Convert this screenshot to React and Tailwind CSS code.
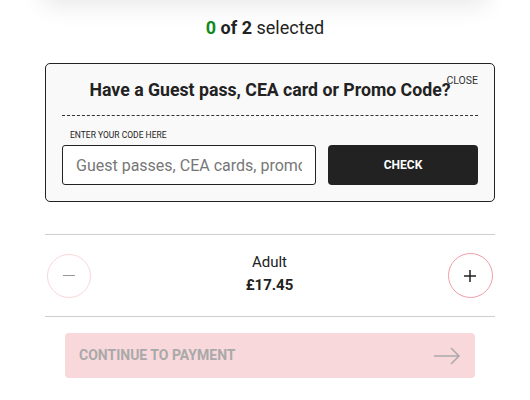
import React, { useState } from "react";

const App = () => {
  const [code, setCode] = useState("");
  const [count, setCount] = useState(0);

  return (
    <div className="w-[530px] h-[400px] bg-white overflow-hidden font-['Roboto',sans-serif] text-[#222]">
      {/* bottom of the card above */}
      <div className="mx-[42px] -mt-[40px] h-[40px] bg-white rounded-b-[10px] shadow-[0_6px_24px_rgba(0,0,0,0.09)]" />

      <p className="mt-[16px] text-center text-[18px] leading-[24px]">
        <span className="font-bold text-[#15891f]">{count}</span>{" "}
        <span className="font-bold">of 2</span> selected
      </p>

      <div className="ml-[45px] w-[450px] mt-[23px] border border-[#222] rounded-[5px] bg-[#f9f9f9] px-[16px] pt-[14px] pb-[16px]">
        <div className="relative">
          <h3 className="text-center text-[17.7px] leading-[24px] font-bold">
            Have a Guest pass, CEA card or Promo Code?
          </h3>
          <button className="absolute right-0 -top-[3px] text-[10.5px] leading-[12px] text-[#333]">
            CLOSE
          </button>
        </div>
        <div className="mt-[13px] border-t border-dashed border-[#333]" />
        <label className="block mt-[14px] ml-[8px] text-[8.5px] leading-[10px] text-[#222]">
          ENTER YOUR CODE HERE
        </label>
        <div className="mt-[5px] flex gap-[12px]">
          <input
            value={code}
            onChange={(e) => setCode(e.target.value)}
            placeholder="Guest passes, CEA cards, promo codes"
            className="w-[254px] h-[40px] border border-[#222] rounded-[3px] bg-white px-[13px] text-[16px] text-[#222] placeholder:text-[#777] outline-none"
          />
          <button className="flex-1 h-[40px] bg-[#222] rounded-[4px] text-white text-[12px] font-bold">
            CHECK
          </button>
        </div>
      </div>

      <div className="ml-[45px] w-[450px] mt-[32px] border-t border-[#cfcfcf] border-b py-[18px] px-[2px] flex items-center justify-between">
        <button
          onClick={() => setCount(Math.max(0, count - 1))}
          className="w-[44px] h-[44px] rounded-full border border-[#fbd6da] flex items-center justify-center"
        >
          <span className="block w-[12px] h-[1.5px] bg-[#999]" />
        </button>
        <div className="text-center -mt-[3px]">
          <p className="text-[15px] leading-[23px]">Adult</p>
          <p className="text-[15px] leading-[23px] font-bold">£17.45</p>
        </div>
        <button
          onClick={() => setCount(Math.min(2, count + 1))}
          className="w-[45px] h-[45px] rounded-full border border-[#ef9ea7] flex items-center justify-center"
        >
          <svg width="14" height="14" viewBox="0 0 14 14" fill="none" stroke="#222" strokeWidth="1.5">
            <path d="M7 1v12M1 7h12" />
          </svg>
        </button>
      </div>

      <button className="ml-[65px] mt-[16px] w-[410px] h-[45px] bg-[#f8d8db] rounded-[4px] flex items-center justify-between px-[14px]">
        <span className="text-[14px] font-bold text-[#a9a9a9]">CONTINUE TO PAYMENT</span>
        <svg width="28" height="20" viewBox="0 0 28 20" fill="none" stroke="#a9a9a9" strokeWidth="1.5">
          <path d="M1 10h25M18 2l8 8-8 8" />
        </svg>
      </button>
    </div>
  );
};

export default App;
